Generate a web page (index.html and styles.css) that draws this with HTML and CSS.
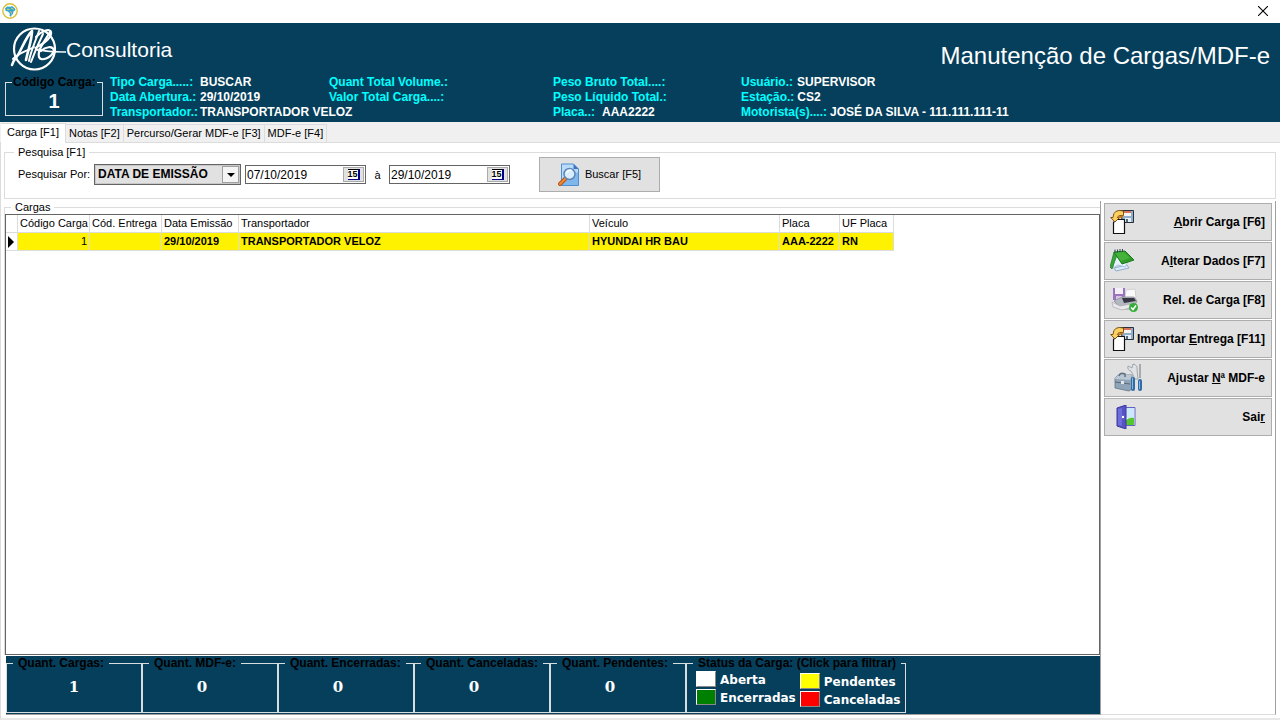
FILE: index.html
```
<!DOCTYPE html>
<html lang="pt-BR">
<head>
    <meta charset="UTF-8">
    <meta name="viewport" content="width=device-width, initial-scale=1.0">
    <title>Manutenção de Cargas/MDF-e</title>
    <link rel="stylesheet" href="styles.css">
</head>
<body>
    <div class="titlebar">
        <svg class="app-icon" viewBox="0 0 16 16" width="16" height="16">
            <circle cx="8" cy="8" r="7.2" fill="#fffef5" stroke="#d9bf3c" stroke-width="1.4"/>
            <path d="M3 5.500l2-2 3.500.3 1.500-.8 2.800 2.200.8 1.800-2 1.200-.6 2.800-1.400 1-.6 2-1.500-1.400.4-1.800-1.800-2.200-2.400-.6z" fill="#35a6cf"/>
            <path d="M5 6.200l2.600.4M9 5l2.500 1.200M8.500 8.400l1.200 2.200" stroke="#e8d45a" stroke-width="1"/>
        </svg>
        <button class="close" type="button" aria-label="Fechar">
            <svg viewBox="0 0 10 10" width="10" height="10"><path d="M0 0l10 10M10 0L0 10" stroke="#000" stroke-width="1.1"/></svg>
        </button>
    </div>

    <header class="header">
        <div class="header-top">
            <div class="logo">
                <svg viewBox="0 0 56 48" width="56" height="48" fill="none" stroke="#fff" stroke-linecap="round" stroke-linejoin="round">
                    <circle cx="24.500" cy="23" r="20.500" stroke-width="2.200"/>
                    <path d="M2 39C3 35 5 33 8 29C12 22 16 11 22 5C22 14 18 24 16 34" stroke-width="2.600"/>
                    <path d="M3 33C8 27 15 26 24 21" stroke-width="2"/>
                    <path d="M29 5C26 14 21 24 19 35M33 8C29 16 25 25 21 36" stroke-width="2"/>
                    <path d="M26 11C31 5 40 2 41 6C42 11 35 17 27 21C25 22 25 23 28 24" stroke-width="2.200"/>
                    <path d="M40 6C35 15 27 24 29 31C31 36 41 32 44 25C43 19 35 21 31 25" stroke-width="2.200"/>
                    <path d="M29 23C35 26 44 26 56 26" stroke-width="1.500"/>
                </svg>
                <span>Consultoria</span>
            </div>
            <h1>Manutenção de Cargas/MDF-e</h1>
        </div>
        <div class="header-info">
            <fieldset class="box code-box">
                <legend>Código Carga:</legend>
                <output>1</output>
            </fieldset>
            <dl class="info info-wide">
                <div><dt>Tipo Carga.....:</dt><dd>BUSCAR</dd></div>
                <div><dt>Data Abertura.:</dt><dd>29/10/2019</dd></div>
                <div><dt>Transportador.:</dt><dd>TRANSPORTADOR VELOZ</dd></div>
            </dl>
            <dl class="info">
                <div><dt>Quant Total Volume.:</dt><dd></dd></div>
                <div><dt>Valor Total Carga....:</dt><dd></dd></div>
            </dl>
            <dl class="info">
                <div><dt>Peso Bruto Total....:</dt><dd></dd></div>
                <div><dt>Peso Líquido Total.:</dt><dd></dd></div>
                <div><dt>Placa..:</dt><dd>AAA2222</dd></div>
            </dl>
            <dl class="info info-user">
                <div><dt>Usuário.:</dt><dd>SUPERVISOR</dd></div>
                <div><dt>Estação.:</dt><dd>CS2</dd></div>
                <div><dt>Motorista(s)....:</dt><dd>JOSÉ DA SILVA - 111.111.111-11</dd></div>
            </dl>
        </div>
    </header>

    <nav class="tabs">
        <button class="tab active" type="button">Carga [F1]</button>
        <button class="tab" type="button">Notas [F2]</button>
        <button class="tab" type="button">Percurso/Gerar MDF-e [F3]</button>
        <button class="tab" type="button">MDF-e [F4]</button>
    </nav>

    <main class="page">
        <fieldset class="group search">
            <legend>Pesquisa [F1]</legend>
            <div class="search-row">
                <label class="search-label" for="filtro">Pesquisar Por:</label>
                <div class="combo">
                    <select id="filtro">
                        <option>DATA DE EMISSÃO</option>
                    </select>
                    <span class="combo-arrow"></span>
                </div>
                <div class="date">
                    <input type="text" id="inicio" value="07/10/2019" aria-label="Data inicial">
                    <button type="button" aria-label="Abrir calendário"><span>15</span></button>
                </div>
                <label class="ate" for="fim">à</label>
                <div class="date">
                    <input type="text" id="fim" value="29/10/2019">
                    <button type="button" aria-label="Abrir calendário"><span>15</span></button>
                </div>
                <button class="btn btn-search" type="button">
                    <svg viewBox="0 0 22 24" width="22" height="24">
                        <path d="M3.500 1h12l5 5v16.500h-17z" fill="#b9dcfa" stroke="#4f8fd0"/>
                        <path d="M4 17l16-8v13H4z" fill="#7fb6ec"/>
                        <path d="M15.500 1v5h5z" fill="#3975bd"/>
                        <path d="M8 15l-6 6" stroke="#b3521a" stroke-width="4" stroke-linecap="round"/>
                        <path d="M8 15l-6 6" stroke="#f28c35" stroke-width="2" stroke-linecap="round"/>
                        <circle cx="11.500" cy="11" r="5.500" fill="#d8eefe" stroke="#5e86b8" stroke-width="1.500"/>
                        <path d="M8.500 9.500q2-3 5-2" stroke="#fff" stroke-width="1.500" fill="none"/>
                    </svg>
                    <span>Buscar [F5]</span>
                </button>
            </div>
        </fieldset>

        <div class="content">
            <section class="left">
                <fieldset class="group cargas">
                    <legend>Cargas</legend>
                    <div class="grid">
                        <table>
                            <colgroup>
                                <col class="c-mark"><col class="c-code"><col class="c-code"><col class="c-date">
                                <col class="c-carrier"><col class="c-vehicle"><col class="c-plate"><col class="c-uf">
                            </colgroup>
                            <thead>
                                <tr>
                                    <th></th>
                                    <th>Código Carga</th>
                                    <th>Cód. Entrega</th>
                                    <th>Data Emissão</th>
                                    <th>Transportador</th>
                                    <th>Veículo</th>
                                    <th>Placa</th>
                                    <th>UF Placa</th>
                                </tr>
                            </thead>
                            <tbody>
                                <tr>
                                    <td class="mark"><svg viewBox="0 0 6 12" width="6" height="12"><path d="M0 0l6 6-6 6z"/></svg></td>
                                    <td class="num">1</td>
                                    <td></td>
                                    <td>29/10/2019</td>
                                    <td>TRANSPORTADOR VELOZ</td>
                                    <td>HYUNDAI HR BAU</td>
                                    <td>AAA-2222</td>
                                    <td>RN</td>
                                </tr>
                            </tbody>
                        </table>
                    </div>
                </fieldset>

                <div class="totals">
                    <fieldset class="box total first"><legend>Quant. Cargas:</legend><output>1</output></fieldset>
                    <fieldset class="box total"><legend>Quant. MDF-e:</legend><output>0</output></fieldset>
                    <fieldset class="box total"><legend>Quant. Encerradas:</legend><output>0</output></fieldset>
                    <fieldset class="box total"><legend>Quant. Canceladas:</legend><output>0</output></fieldset>
                    <fieldset class="box total"><legend>Quant. Pendentes:</legend><output>0</output></fieldset>
                    <fieldset class="box status">
                        <legend>Status da Carga: (Click para filtrar)</legend>
                        <div class="status-cols">
                            <div class="status-col">
                                <button type="button"><i class="swatch white"></i>Aberta</button>
                                <button type="button"><i class="swatch green"></i>Encerradas</button>
                            </div>
                            <div class="status-col lower">
                                <button type="button"><i class="swatch yellow"></i>Pendentes</button>
                                <button type="button"><i class="swatch red"></i>Canceladas</button>
                            </div>
                        </div>
                    </fieldset>
                </div>
            </section>

            <aside class="actions">
                <button class="btn" type="button">
                    <svg viewBox="0 0 26 26" width="26" height="26">
                        <path d="M10.500 1.500h13v12h-11z" fill="#8fb0cd" stroke="#26313c"/>
                        <path d="M13 2h8v5h-8z" fill="#f7f4f2"/><path d="M13 2h8v2h-8z" fill="#d9735b"/>
                        <path d="M15 9h6v4h-6z" fill="#e8eef3"/><path d="M16 10h2v3h-2z" fill="#536b80"/>
                        <path d="M3.500 13.500l3-3h8v14h-11z" fill="#fff" stroke="#111" stroke-linejoin="round" stroke-width="1.200"/>
                        <path d="M.7 8.500L5 13l4.500-4.500H7.300Q8 6 13.500 6.500V2Q3.500-.5 3 8.500z" fill="#ffd060" stroke="#6b4a10" stroke-width=".9"/>
                        <path d="M8 8.500q1-2 5-2v2q-3 0-3.500 1z" fill="#c97a17"/>
                    </svg>
                    <span><u>A</u>brir Carga [F6]</span>
                </button>
                <button class="btn" type="button">
                    <svg viewBox="0 0 26 26" width="26" height="26">
                        <path d="M4 20l13-3 2 3-13 3z" fill="#dceafa" stroke="#8faed0"/>
                        <path d="M4 4L3 20l5-3 7 2 3-5z" fill="#e9f3ff" stroke="#a9c4de"/>
                        <path d="M4 4L0 19l2 2L7 7z" fill="#38a63a" stroke="#167a1b" stroke-width=".7"/>
                        <path d="M4 4l11-1 9 9-12 4z" fill="#2f9c2a" stroke="#167a1b"/>
                        <path d="M5 5l9-1 6 6-9 3z" fill="#45b23a"/>
                        <path d="M5 1.500v3M7.500 1.500v3M10 1v3M12.500 1v3" stroke="#345" stroke-width="1"/>
                    </svg>
                    <span>A<u>l</u>terar Dados [F7]</span>
                </button>
                <button class="btn" type="button">
                    <svg viewBox="0 0 28 26" width="28" height="26">
                        <path d="M3 1h12v12H3z" fill="#9a74bd"/><path d="M5 1h8v6H5z" fill="#f3eff7"/><path d="M6 9h6v4H6z" fill="#d8c4e6"/>
                        <path d="M16 3l9-1 1 9H15z" fill="#fbfbfb" stroke="#c4c4c8" stroke-width=".7"/>
                        <path d="M4 14l8-4h12l3 4-4 8H12z" fill="#b3b7c1" stroke="#8a8d97" stroke-width=".8"/>
                        <path d="M12 11h12l2 3-12 2z" fill="#343741"/>
                        <path d="M2 15l8 4 11-2-1 4-8 2-9-3z" fill="#e8e8ed" stroke="#aaa" stroke-width=".7"/>
                        <circle cx="23.500" cy="20.500" r="4.500" fill="#35ad39"/><path d="M21 20.500l2 2 3-4" fill="none" stroke="#fff" stroke-width="1.500"/>
                    </svg>
                    <span>Rel. de Carga [F8]</span>
                </button>
                <button class="btn" type="button">
                    <svg viewBox="0 0 26 26" width="26" height="26">
                        <path d="M10.500 1.500h13v12h-11z" fill="#8fb0cd" stroke="#26313c"/>
                        <path d="M13 2h8v5h-8z" fill="#f7f4f2"/><path d="M13 2h8v2h-8z" fill="#d9735b"/>
                        <path d="M15 9h6v4h-6z" fill="#e8eef3"/><path d="M16 10h2v3h-2z" fill="#536b80"/>
                        <path d="M3.500 13.500l3-3h8v14h-11z" fill="#fff" stroke="#111" stroke-linejoin="round" stroke-width="1.200"/>
                        <path d="M.7 8.500L5 13l4.500-4.500H7.300Q8 6 13.500 6.500V2Q3.500-.5 3 8.500z" fill="#ffd060" stroke="#6b4a10" stroke-width=".9"/>
                        <path d="M8 8.500q1-2 5-2v2q-3 0-3.500 1z" fill="#c97a17"/>
                    </svg>
                    <span>Importar <u>E</u>ntrega [F11]</span>
                </button>
                <button class="btn" type="button">
                    <svg class="tools" viewBox="0 0 30 30" width="30" height="30">
                        <path d="M22 16L18 8q-4-1-3-5l4 2 1-4q5 1 4 6l1 9z" fill="#e0e3e6" stroke="#92989d" stroke-width=".8"/>
                        <path d="M2 15l3-3h14v14l-3 2-14-3z" fill="#8fa4b7" stroke="#607487" stroke-width=".8"/>
                        <path d="M2 15l3-3h14l-2 5-15-1z" fill="#b9c8d4"/><path d="M2 19l15 2" stroke="#58697a"/>
                        <path d="M6 13q1-4 6-2v3" fill="none" stroke="#617080" stroke-width="1.500"/>
                        <path d="M8 18h3v3H8z" fill="#e3e7ea"/>
                        <path d="M20 16v10" stroke="#326ca6" stroke-width="4" stroke-linecap="round"/>
                        <path d="M27 1v14" stroke="#9199a0" stroke-width="1.500"/>
                        <path d="M27 18v8" stroke="#326ca6" stroke-width="4" stroke-linecap="round"/>
                        <path d="M19.500 15v11M26.500 18v8" stroke="#86b9e2"/>
                    </svg>
                    <span>Ajustar <u>N</u>ª MDF-e</span>
                </button>
                <button class="btn" type="button">
                    <svg class="door" viewBox="0 0 20 24" width="20" height="24">
                        <path d="M8 2.500h11v18H8z" fill="#f7f9ff" stroke="#6262c5"/>
                        <path d="M9 3h9v10H9z" fill="#cbe9fb"/><path d="M10 15q4-3 8-2v7h-8z" fill="#55c72f"/>
                        <path d="M1 3l9-3v24l-9-3z" fill="#5653c2" stroke="#3c3aa0"/>
                        <path d="M2 4l4-1v18l-4-1z" fill="#6f6dda"/><circle cx="7" cy="12" r="1.200" fill="#fff"/>
                    </svg>
                    <span>Sai<u>r</u></span>
                </button>
            </aside>
        </div>
    </main>
</body>
</html>
```
FILE: styles.css
```
* {
    box-sizing: border-box;
}

body {
    margin: 0;
    min-height: 100vh;
    display: flex;
    flex-direction: column;
    background: #fff;
    color: #000;
    font: 11px/13px "Liberation Sans", Arial, sans-serif;
}

button,
input,
select {
    font: inherit;
    color: inherit;
}

button {
    margin: 0;
    padding: 0;
    border: 0;
    background: none;
}

fieldset {
    min-width: 0;
    margin: 0;
    padding: 0;
}

/* barra de titulo */
.titlebar {
    height: 23px;
    display: flex;
    align-items: center;
    justify-content: space-between;
    padding: 0 12px 2px 2px;
}

.titlebar svg,
.btn svg {
    display: block;
}

/* cabecalho */
.header {
    height: 99px;
    background: #063f5c;
    color: #fff;
}

.header-top {
    display: flex;
    justify-content: space-between;
    height: 52px;
    padding: 1px 10px 0;
}

.logo {
    display: flex;
    align-items: center;
    font-size: 21px;
}

h1 {
    margin: 18px 0 0;
    font-size: 24px;
    line-height: 28px;
    font-weight: normal;
}

.header-info {
    display: grid;
    grid-template-columns: 98px 219px 224px 188px 1fr;
    padding-left: 5px;
    font-size: 12px;
    line-height: 15px;
    font-weight: bold;
    white-space: nowrap;
}

.box {
    border: 1px solid #d8dde0;
}

.box legend {
    color: #000;
    font-weight: bold;
    font-size: 12px;
    line-height: 14px;
}

.code-box {
    height: 41px;
}

.code-box legend {
    padding: 0 1px;
    margin-left: 6px;
}

.code-box output {
    font-size: 20px;
    line-height: 24px;
    display: block;
    text-align: center;
}

.info {
    margin: 0;
    padding-left: 7px;
}

.info div {
    display: flex;
    gap: 7px;
}

.info dt {
    color: #0ff;
}

.info dd {
    margin: 0;
}

.info-wide div,
.info-user div {
    gap: 3px;
}

.info-wide dt {
    width: 87px;
}

.info-user dt {
    min-width: 53px;
}

/* abas */
.tabs {
    display: flex;
    align-items: flex-end;
    height: 21px;
    padding-left: 1px;
    background: #f0f0f0;
    border-bottom: 1px solid #dcdcdc;
}

.tab {
    height: 18px;
    padding: 0 3px;
    border: 1px solid #dcdcdc;
    border-width: 1px 1px 0 0;
    font-size: 11px;
    white-space: nowrap;
}

.tab.active {
    height: 20px;
    margin-bottom: -1px;
    padding: 0 6px 2px;
    background: #fff;
}

.page {
    flex: 1;
    display: flex;
    flex-direction: column;
    padding: 3px 4px 3px 3px;
    border-left: 1px solid #dcdcdc;
    border-bottom: 2px solid #e8e8e8;
}

/* pesquisa */
.group {
    border: 1px solid #dcdcdc;
}

.group legend {
    margin-left: 9px;
    padding: 0 4px;
}

.search {
    height: 53px;
}

.search-row {
    display: flex;
    align-items: center;
    padding: 0 13px;
    margin-top: -2px;
}

.search-label {
    width: 76px;
}

.combo {
    position: relative;
    width: 147px;
    height: 21px;
    margin-right: 4px;
}

.combo select {
    appearance: none;
    width: 100%;
    height: 100%;
    padding: 0 22px 0 3px;
    border: 1px solid #646464;
    border-radius: 0;
    outline: 1px solid #c8c8c8;
    outline-offset: -2px;
    background: #e1e1e1;
    font-size: 12px;
    line-height: 17px;
    font-weight: bold;
}

.combo-arrow {
    position: absolute;
    top: 2px;
    right: 2px;
    width: 17px;
    height: 17px;
    border: 1px solid #a0a0a0;
    background: #f4f4f4;
    pointer-events: none;
}

.combo-arrow::after {
    content: "";
    position: absolute;
    top: 6px;
    left: 4px;
    border: 4px solid transparent;
    border-top-color: #000;
    border-bottom: 0;
}

.date {
    display: flex;
    align-items: center;
    width: 121px;
    height: 19px;
    padding-right: 1px;
    border: 1px solid #646464;
}

.date input {
    flex: 1;
    min-width: 0;
    height: 15px;
    padding: 0 1px;
    border: 0;
    outline: 0;
    background: none;
    font-size: 12px;
}

.date button {
    width: 21px;
    height: 15px;
    border: 1px solid #aaa;
    background: #e1e1e1;
}

.date button span {
    display: block;
    width: 12px;
    height: 11px;
    margin: 0 auto;
    border: 1px solid #000;
    border-width: 1px 2px 1px 0;
    border-right-color: #00008b;
    border-bottom-color: #00008b;
    background: #fff;
    font-size: 9px;
    line-height: 9px;
    font-weight: bold;
}

.ate {
    width: 23px;
    padding-top: 2px;
    text-align: center;
}

.btn {
    display: flex;
    align-items: center;
    background: #e1e1e1;
    border: 1px solid #adadad;
}

.btn-search {
    width: 121px;
    height: 35px;
    justify-content: center;
    gap: 5px;
    margin-left: 29px;
}

/* area principal */
.content {
    flex: 1;
    display: flex;
    padding-top: 2px;
}

.left {
    flex: 1;
    min-width: 0;
    display: flex;
    flex-direction: column;
    border-right: 1px solid #a0a0a0;
}

.cargas {
    flex: 1;
    border-width: 1px 0 0 1px;
}

.cargas legend {
    margin-left: 6px;
}

.grid {
    height: 100%;
    border: 1px solid #646464;
    overflow: hidden;
}

table {
    width: 888px;
    table-layout: fixed;
    border-collapse: separate;
    border-spacing: 0;
}

.c-mark { width: 12px; }
.c-code { width: 72px; }
.c-date { width: 77px; }
.c-carrier { width: 351px; }
.c-vehicle { width: 190px; }
.c-plate { width: 60px; }
.c-uf { width: 54px; }

th,
td {
    height: 18px;
    padding: 0 2px;
    border-right: 1px solid #dcdcdc;
    border-bottom: 1px solid #dcdcdc;
    text-align: left;
    white-space: nowrap;
    overflow: hidden;
}

th {
    font-weight: normal;
}

td {
    background: #fff200;
    font-weight: bold;
}

td.num {
    text-align: right;
    font-weight: normal;
}

td.mark {
    background: #fff;
}

.mark svg {
    display: block;
}

/* rodape com os totais */
.totals {
    display: flex;
    height: 59px;
    margin-top: 1px;
    margin-left: 2px;
    padding-bottom: 1px;
    background: #063f5c;
    border-bottom: 1px solid #a0a0a0;
    color: #fff;
}

.total {
    width: 136px;
}

.box.total legend,
.box.status legend {
    margin-left: 6px;
    padding: 0 5px;
    white-space: nowrap;
}

.total output {
    display: block;
    margin-top: 8px;
    padding-right: 16px;
    font: bold 15px/18px "DejaVu Serif", serif;
    text-align: center;
}

.total.first output {
    padding-right: 0;
}

.status {
    width: 220px;
}

.status-cols {
    display: flex;
    gap: 4px;
    padding: 1px 0 0 9px;
}

.status-col button {
    display: flex;
    gap: 4px;
    height: 18px;
    align-items: flex-start;
    font: bold 12px/19px "DejaVu Sans", sans-serif;
}

.status-col.lower {
    padding-top: 2px;
}

.swatch {
    width: 20px;
    height: 16px;
    border: 1px solid #fff;
    border-right-color: #888;
    border-bottom-color: #888;
}

.white { background: #fff; }
.green { background: #008000; }
.yellow { background: #ff0; }
.red { background: #f00; }

/* botoes laterais */
.actions {
    width: 175px;
    display: flex;
    flex-direction: column;
    gap: 1px;
    padding: 2px 3px 0;
    border-right: 1px solid #a0a0a0;
    border-bottom: 1px solid #dcdcdc;
}

.actions .btn {
    height: 38px;
    justify-content: space-between;
    padding: 0 6px 0 5px;
    font-size: 12px;
    font-weight: bold;
    white-space: nowrap;
}

.actions .door {
    margin-left: 6px;
}

.actions .tools {
    margin-left: 3px;
}
```
